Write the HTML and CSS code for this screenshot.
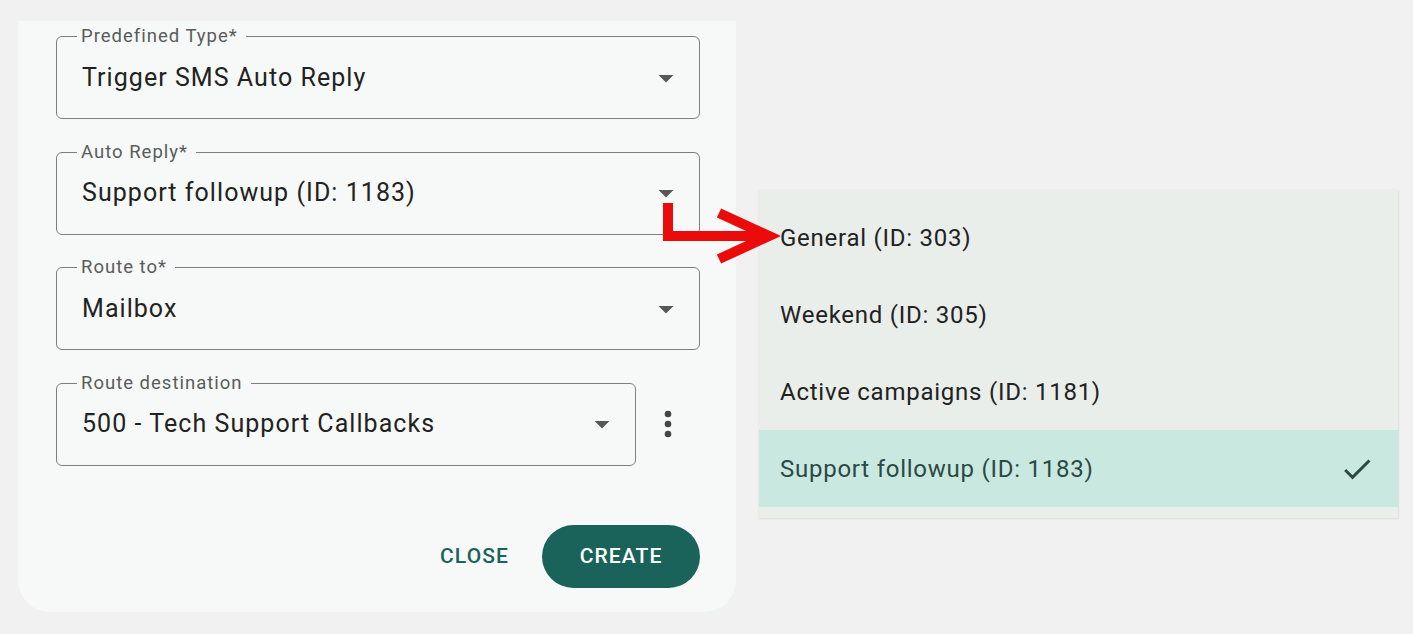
FILE: index.html
```html
<!DOCTYPE html>
<html lang="en">
<head>
<meta charset="utf-8">
<title>Create rule</title>
<link rel="stylesheet" href="styles.css">
</head>
<body>
<div class="page">
  <div class="card">
    <div class="fields">
      <div class="field">
        <span class="field-label">Predefined Type*</span>
        <span class="field-value">Trigger SMS Auto Reply</span>
        <svg class="drop" viewBox="0 0 24 24"><path d="M7 10l5 5 5-5z"/></svg>
      </div>
      <div class="field">
        <span class="field-label">Auto Reply*</span>
        <span class="field-value">Support followup (ID: 1183)</span>
        <svg class="drop" viewBox="0 0 24 24"><path d="M7 10l5 5 5-5z"/></svg>
      </div>
      <div class="field">
        <span class="field-label">Route to*</span>
        <span class="field-value">Mailbox</span>
        <svg class="drop" viewBox="0 0 24 24"><path d="M7 10l5 5 5-5z"/></svg>
      </div>
      <div class="field-row">
        <div class="field">
          <span class="field-label">Route destination</span>
          <span class="field-value">500 - Tech Support Callbacks</span>
          <svg class="drop" viewBox="0 0 24 24"><path d="M7 10l5 5 5-5z"/></svg>
        </div>
        <div class="kebab">
          <svg viewBox="0 0 24 24"><circle cx="12" cy="6" r="2"/><circle cx="12" cy="12" r="2"/><circle cx="12" cy="18" r="2"/></svg>
        </div>
      </div>
    </div>
    <div class="actions">
      <button class="btn-text">CLOSE</button>
      <button class="btn-filled">CREATE</button>
    </div>
  </div>

  <ul class="menu">
    <li class="menu-item">General (ID: 303)</li>
    <li class="menu-item">Weekend (ID: 305)</li>
    <li class="menu-item">Active campaigns (ID: 1181)</li>
    <li class="menu-item selected">Support followup (ID: 1183)
      <svg class="check" viewBox="0 0 24 24"><path d="M9 16.17L4.83 12l-1.42 1.41L9 19 21 7l-1.41-1.41z"/></svg>
    </li>
  </ul>

  <svg class="pointer" viewBox="650 190 130 80">
    <path d="M668 203 V236 H762" />
    <polyline points="719,213 769,236 719,259" />
  </svg>
</div>
</body>
</html>
```

FILE: styles.css
```css
html, body {
  margin: 0;
  padding: 0;
  background: #f1f1f1;
  font-family: Roboto, "Noto Sans", Arial, sans-serif;
}

.page {
  position: relative;
  width: 1413px;
  height: 634px;
  overflow: hidden;
}

.card {
  margin: 21px 0 0 18px;
  width: 718px;
  box-sizing: border-box;
  padding: 15px 36px 24px 38px;
  background: #f7f9f8;
  border-radius: 0 0 32px 32px;
  display: flex;
  flex-direction: column;
}

.fields {
  display: flex;
  flex-direction: column;
  gap: 32.5px;
}

.field {
  position: relative;
  height: 83px;
  box-sizing: border-box;
  border: 1px solid #7d7f7e;
  border-radius: 6px;
  display: flex;
  align-items: center;
  padding: 0 15px 0 25px;
}

.field-label {
  position: absolute;
  top: -11px;
  left: 20px;
  padding: 0 8px 0 4px;
  background: #f7f9f8;
  font-size: 18.5px;
  line-height: 20px;
  color: #5a5c5b;
  letter-spacing: 1px;
}

.field-value {
  flex: 1;
  font-size: 25px;
  line-height: 28px;
  color: #222222;
  letter-spacing: 1.05px;
  white-space: nowrap;
}

.drop {
  width: 36px;
  height: 36px;
  fill: #575757;
  flex: none;
}

.field-row {
  display: flex;
  align-items: center;
}

.field-row .field {
  flex: 1;
}

.kebab {
  width: 64px;
  display: flex;
  justify-content: center;
  align-items: center;
  flex: none;
}

.kebab svg {
  width: 40px;
  height: 40px;
  fill: #454545;
}

.actions {
  margin-top: 59px;
  display: flex;
  justify-content: flex-end;
  align-items: center;
  gap: 21px;
}

button {
  font-family: Roboto, "Noto Sans", Arial, sans-serif;
  font-weight: 500;
  font-size: 21px;
  letter-spacing: 1.1px;
  border: none;
  cursor: pointer;
}

.btn-text {
  background: transparent;
  color: #1b6359;
  padding: 9px 12px;
  height: 63px;
}

.btn-filled {
  background: #19635a;
  color: #ffffff;
  width: 158px;
  height: 63px;
  border-radius: 32px;
}

.menu {
  position: absolute;
  left: 759px;
  top: 190px;
  width: 639px;
  margin: 0;
  padding: 9px 0 11px;
  list-style: none;
  background: #e9eeeb;
  box-shadow: 0 1px 2px rgba(0, 0, 0, 0.08), 1px 0 2px rgba(0, 0, 0, 0.06);
}

.menu-item {
  height: 77px;
  box-sizing: border-box;
  display: flex;
  align-items: center;
  justify-content: space-between;
  padding: 0 23px 0 21px;
  font-size: 24px;
  color: #222222;
  letter-spacing: 0.75px;
}

.menu-item.selected {
  background: #c9e8e0;
  color: #2c4944;
}

.check {
  width: 36px;
  height: 36px;
  fill: #2c4944;
}

.pointer {
  position: absolute;
  left: 650px;
  top: 190px;
  width: 130px;
  height: 80px;
  fill: none;
  stroke: #ec0b0b;
  stroke-width: 10;
  stroke-linejoin: miter;
}
```
